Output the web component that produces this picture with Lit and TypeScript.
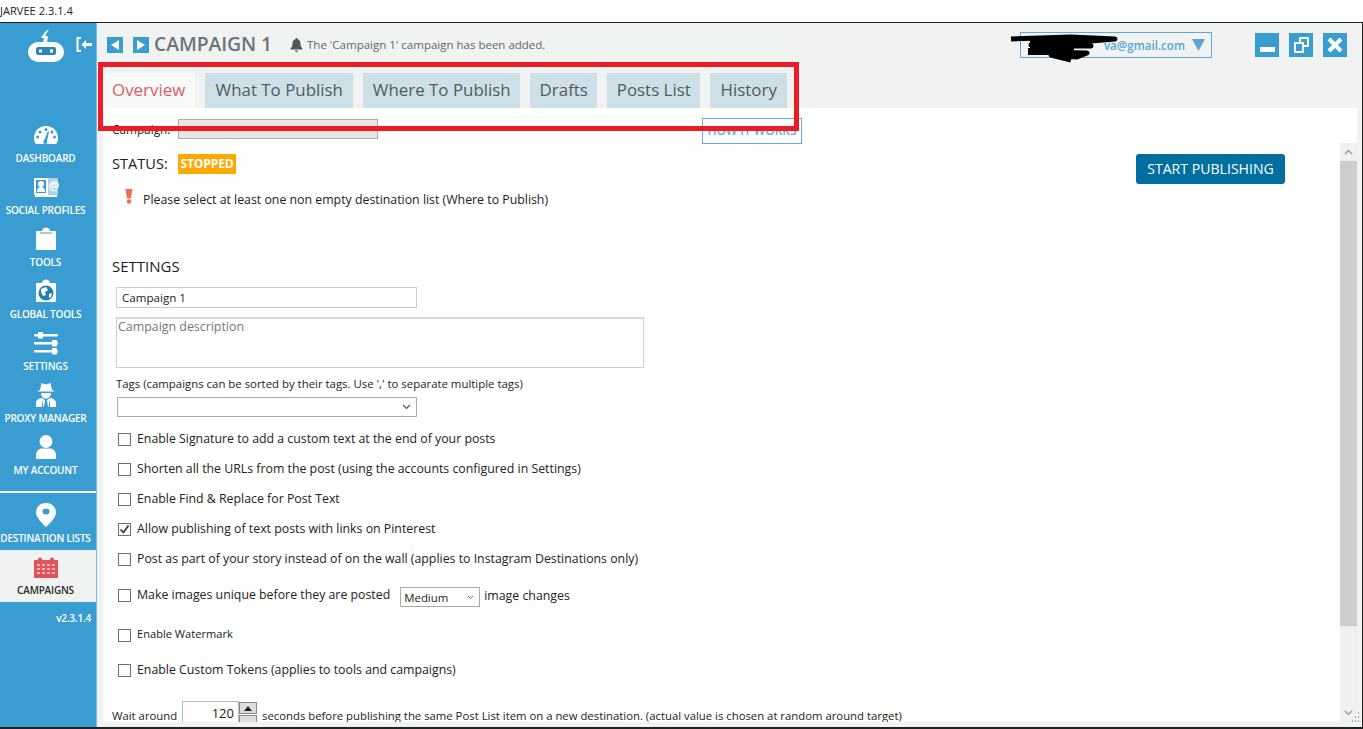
import { LitElement, html, css, svg } from "lit";
import { customElement } from "lit/decorators.js";

const I = {
  dash: svg`<svg width="26" height="24" viewBox="0 0 26 24"><path d="M13 3C6 3 1 8.500 1 15c0 2.500.7 4.500 2 6h20c1.300-1.500 2-3.500 2-6 0-6.500-5-12-12-12z" fill="#fff"/><g fill="#3a9dd1"><circle cx="13" cy="6.500" r="1.500"/><circle cx="7" cy="9" r="1.500"/><circle cx="19" cy="9" r="1.500"/><circle cx="4.500" cy="14" r="1.500"/><circle cx="21.500" cy="14" r="1.500"/><path d="M15 8l1 1-2 9a2 2 0 1 1-3-.5z"/></g></svg>`,
  social: svg`<svg width="26" height="24" viewBox="0 0 26 24"><path d="M1 3h14v17H1z" fill="#fff"/><path d="M3 5h10v13H3z" fill="#3a9dd1"/><circle cx="8" cy="9" r="3" fill="#fff"/><path d="M4 17c0-4 2-5 4-5s4 1 4 5z" fill="#fff"/><path d="M15 3h10v17H15z" fill="#a9d3ea"/><path d="M15 20h9v2H2v-2z" fill="#fff"/><text x="15.500" y="15" font-size="12" font-weight="700" font-family="Open Sans" fill="#fff">@</text></svg>`,
  tools: svg`<svg width="26" height="24" viewBox="0 0 26 24"><path d="M4 4h5c0-2 2-3.500 4-3.500S17 2 17 4h5c.6 0 1 .4 1 1v17c0 .6-.4 1-1 1H4c-.6 0-1-.4-1-1V5c0-.6.4-1 1-1z" fill="#fff"/><path d="M7 6h12" stroke="#3a9dd1" stroke-width="1"/></svg>`,
  globe: svg`<svg width="26" height="24" viewBox="0 0 26 24"><path d="M4 4h5c0-2 2-3.500 4-3.500S17 2 17 4h5c.6 0 1 .4 1 1v17c0 .6-.4 1-1 1H4c-.6 0-1-.4-1-1V5c0-.6.4-1 1-1z" fill="#fff"/><circle cx="13" cy="14" r="7.500" fill="#1f7fb3"/><path d="M8 10l5-2 2 3-3 2 1 3-3 1-2-4zM16 15l3-1-1 4-2 1z" fill="#fff"/></svg>`,
  sliders: svg`<svg width="26" height="24" viewBox="0 0 26 24"><g fill="#fff"><rect x="1" y="3" width="24" height="2.500" rx="1"/><rect x="5" y="1" width="5" height="6.500" rx="1"/><rect x="1" y="11" width="24" height="2.500" rx="1"/><rect x="19" y="9" width="5" height="6.500" rx="1"/><rect x="1" y="19" width="24" height="2.500" rx="1"/><rect x="19" y="17" width="5" height="6.500" rx="1"/></g></svg>`,
  spy: svg`<svg width="26" height="24" viewBox="0 0 26 24"><path d="M8.500 0l4.500 1.500L17.500 0l1.500 7 3 1.500H4L7 7z" fill="#fff"/><path d="M8 10h10c0 3.500-2 5.500-5 5.500S8 13.500 8 10z" fill="#fff"/><path d="M3 24v-4c0-3 2.500-4.500 6-5l4 3 4-3c3.500.5 6 2 6 5v4z" fill="#fff"/><path d="M12 17h2l1 7h-4zM9 16l1.500 8H9zM17 16l-1.500 8H17z" fill="#3a9dd1"/></svg>`,
  user: svg`<svg width="26" height="24" viewBox="0 0 26 24"><circle cx="13" cy="6.500" r="6.500" fill="#fff"/><path d="M3 24v-4c0-4 3-6.500 6-6.500h8c3 0 6 2.500 6 6.500v4z" fill="#fff"/></svg>`,
  pin: svg`<svg width="26" height="24" viewBox="0 0 26 24"><path fill-rule="evenodd" d="M13 0c6 0 10 4 10 9.500 0 5-6 10.500-10 14.500C9 20 3 14.500 3 9.500 3 4 7 0 13 0zm0 5.500a3.500 3 0 1 0 0 6 3.500 3 0 0 0 0-6z" fill="#fff"/></svg>`,
  cal: svg`<svg width="26" height="24" viewBox="0 -2 26 24"><path d="M2 3h22c.6 0 1 .4 1 1v16c0 .6-.4 1-1 1H2c-.6 0-1-.4-1-1V4c0-.6.4-1 1-1z" fill="#e2525a"/><circle cx="7" cy="2.500" r="2" fill="#e2525a"/><circle cx="19" cy="2.500" r="2" fill="#e2525a"/><g fill="#f7b9bc"><rect x="4" y="7" width="3" height="2"/><rect x="9" y="7" width="3" height="2"/><rect x="14" y="7" width="3" height="2"/><rect x="19" y="7" width="3" height="2"/><rect x="4" y="11" width="3" height="2"/><rect x="9" y="11" width="3" height="2"/><rect x="14" y="11" width="3" height="2"/><rect x="19" y="11" width="3" height="2"/><rect x="4" y="15" width="3" height="2"/><rect x="9" y="15" width="3" height="2"/><rect x="14" y="15" width="3" height="2"/><rect x="19" y="15" width="3" height="2"/></g></svg>`,
};

const NAV_TOP = [
  ["DASHBOARD", I.dash],
  ["SOCIAL PROFILES", I.social],
  ["TOOLS", I.tools],
  ["GLOBAL TOOLS", I.globe],
  ["SETTINGS", I.sliders],
  ["PROXY MANAGER", I.spy],
  ["MY ACCOUNT", I.user],
] as const;

const TABS: [string, number][] = [
  ["What To Publish", 148],
  ["Where To Publish", 157],
  ["Drafts", 67],
  ["Posts List", 93],
  ["History", 77],
];

@customElement("app-root")
export class AppRoot extends LitElement {
  static styles = css`
    :host { display: block; width: 1363px; height: 729px; overflow: hidden; position: relative; background: #222;
      font-family: "Open Sans", "Noto Sans", sans-serif; color: #222; }
    * { box-sizing: border-box; }
    .titlebar { height: 22px; background: #fff; font-size: 11.100px; line-height: 22px; color: #222; white-space: nowrap; }
    .window { height: 704px; margin-top: 1px; display: flex; margin-right: 1px; background: #f1f3f3; }
    .side { width: 97px; flex: none; background: #3a9dd1; border-right: 1px solid #7dbbdf; color: #fff; display: flex; flex-direction: column; }
    .logo { height: 95px; display: flex; align-items: flex-start; }
    .logo svg.bot { margin: 5px 0 0 27px; }
    .logo svg.col { margin: 14px 0 0 11px; }
    .item { height: 52px; display: flex; flex-direction: column; align-items: center; padding: 5px 5px 0 0; }
    .ic { height: 28px; display: block; }
    .lab { font-size: 10px; font-weight: 600; line-height: 14px; white-space: nowrap; letter-spacing: -.2px; }
    .item.on { background: #f1f3f3; color: #2a2a2a; }
    .sep { height: 2px; background: #fff; margin: 9px 0 5px; }
    .ver { font-size: 10px; font-weight: 600; text-align: right; padding: 9px 5px 0 0; letter-spacing: -.2px; }
    .main { flex: 1; min-width: 0; display: flex; flex-direction: column; }
    .head { height: 85px; position: relative; flex: none; }
    .hrow { height: 50px; display: flex; align-items: flex-start; }
    .arrow { width: 16px; height: 16px; background: #3a9dd1; margin-top: 14px; display: flex; align-items: center; justify-content: center; }
    .arrow.a1 { margin-left: 10px; }
    .arrow.a2 { margin-left: 10px; }
    .ttl { margin: 7px 0 0 5px; font-size: 19.400px; font-weight: 600; line-height: 28px; color: #6d7479; letter-spacing: -.1px; white-space: nowrap; }
    .bell { margin: 15px 0 0 18px; }
    .msg { margin: 13px 0 0 4px; font-size: 11.500px; line-height: 18px; color: #666; white-space: nowrap; }
    .email { position: absolute; left: 923px; top: 9px; width: 192px; height: 26px; border: 1px solid #62a8d8; display: flex; align-items: center; justify-content: flex-end; padding-right: 6px; gap: 7px; color: #5ca4d6; font-size: 11.600px; font-weight: 600; overflow: hidden; white-space: nowrap; }
    .wbtns { position: absolute; left: 1158px; top: 10px; display: flex; gap: 10px; }
    .wb { width: 24px; height: 24px; background: #3a9dd1; display: block; }
    .tabs { display: flex; gap: 10px; padding-left: 6px; height: 35px; }
    .tab { height: 35px; background: #cde0e8; text-align: center; font-size: 16.900px; line-height: 33px; color: #56595c; white-space: nowrap; }
    .tab.on { background: #f8f9f9; color: #d9605f; padding: 0 10px 0 9px; }
    .body { flex: 1; min-height: 0; margin: 0 5px 5px 6px; background: #fff; display: flex; overflow: hidden; }
    .form { flex: 1; min-width: 0; padding: 0 55px 0 9px; display: flex; flex-direction: column; font-size: 12.330px; }
    .form > * { flex: none; }
    .r1 { height: 26px; margin-top: 10px; display: flex; align-items: flex-start; }
    .r1 .cl { width: 66px; line-height: 20px; margin-top: 1px; font-size: 11.800px; }
    .csel { width: 200px; height: 20px; margin-top: 1px; background: #e6e6e6; border: 1px solid #adadad; }
    .how { margin-left: 324px; width: 100px; height: 26px; border: 1px solid #6aaad6; color: #6aaad6; text-align: center; line-height: 24px; font-size: 12px; font-weight: 600; white-space: nowrap; }
    .r2 { height: 30px; margin-top: 10px; display: flex; align-items: flex-start; }
    .st { width: 66px; font-size: 14.600px; line-height: 18px; }
    .badge { width: 58px; height: 20px; background: #ffa800; color: #fff; font-weight: 700; font-size: 12.200px; line-height: 19px; text-align: center; white-space: nowrap; letter-spacing: -.2px; }
    .start { margin-left: auto; width: 149px; height: 30px; background: #006f9f; color: #fff; border-radius: 3px; text-align: center; line-height: 29px; font-size: 14.100px; white-space: nowrap; }
    .warn { height: 18px; margin-top: 6px; display: flex; align-items: flex-start; padding-left: 12px; }
    .warn span { margin: 1px 0 0 9px; line-height: 18px; white-space: nowrap; }
    .warn svg { margin-top: -1px; }
    .sett { margin-top: 48px; font-size: 15px; line-height: 20px; }
    .in { margin: 11px 0 0 4px; width: 301px; height: 21px; border: 1px solid #ccc; line-height: 19px; padding-left: 5px; font-size: 11.600px; }
    .ta { margin: 9px 0 0 4px; width: 528px; height: 51px; border: 1px solid #ccc; border-top: 2px solid #d8d8d8; padding: 0 1px; color: #777; line-height: 16px; font-size: 12.400px; }
    .tags { margin: 9px 0 0 4px; line-height: 14px; height: 14px; font-size: 11.400px; white-space: nowrap; }
    .sel { margin: 6px 0 0 5px; width: 300px; height: 20px; border: 1px solid #aaa; display: flex; align-items: center; justify-content: flex-end; padding-right: 5px; }
    .ck { height: 30px; display: flex; align-items: center; padding-left: 6px; white-space: nowrap; }
    .ck .lb { margin-left: 6px; margin-top: -2px; }
    .box { width: 13px; height: 13px; border: 1px solid #6f6f6f; background: #fff; flex: none; display: flex; align-items: center; justify-content: center; }
    .g0 { margin-top: 7px; }
    .g6 { margin-top: 6px; }
    .g10 { margin-top: 10px; font-size: 11.100px; }
    .g10 .lb { margin-top: -4px; }
    .g5 { margin-top: 5px; }
    .med { width: 80px; height: 20px; margin: 4px 0 0 10px; border: 1px solid #aaa; padding: 0 5px 0 3px; font-size: 11.400px; display: flex; align-items: center; justify-content: space-between; }
    .after { margin: 0 0 0 4px; }
    .wait { height: 30px; margin-top: 16px; display: flex; align-items: flex-start; white-space: nowrap; font-size: 11.330px; }
    .wait .t1 { width: 70px; line-height: 28px; margin-top: 1px; }
    .num { width: 57px; height: 26px; border: 1px solid #bbb; text-align: right; padding-right: 4px; line-height: 23px; font-size: 13px; }
    .spin { width: 18px; height: 26px; display: flex; flex-direction: column; margin-top: 1px; }
    .spin i { display: flex; height: 12px; border: 1px solid #888; background: #ddd; align-items: center; justify-content: center; margin-bottom: 1px; }
    .wait .t2 { margin: 1px 0 0 5px; line-height: 28px; }
    .sb { width: 17px; flex: none; margin-top: 35px; background: #f0f0f0; display: flex; flex-direction: column; }
    .sb .u { height: 18px; display: flex; align-items: center; justify-content: center; }
    .sb .th { height: 465px; background: #cdcdcd; }
    .sb .sp { flex: 1; }
    .sb .d { height: 18px; display: flex; align-items: center; justify-content: center; }
    .red { position: absolute; left: 98px; top: 62px; width: 701px; height: 69px; border: 5px solid #ee1c25; pointer-events: none; }
    .scrib { position: absolute; left: 1008px; top: 34px; pointer-events: none; }
    .grip { position: absolute; left: 1349px; top: 711px; }
  `;

  private check(text: unknown, cls = "", on = false, extra: unknown = "") {
    return html`<div class="ck ${cls}"><span class="box">${on
      ? svg`<svg width="11" height="11" viewBox="0 0 11 11"><path d="M1.500 5.500l3 3 5-7" fill="none" stroke="#333" stroke-width="1.700"/></svg>`
      : ""}</span><span class="lb">${text}</span>${extra}</div>`;
  }

  render() {
    const chev = svg`<svg width="9" height="6" viewBox="0 0 9 6"><path d="M1 1l3.500 3.500L8 1" fill="none" stroke="#555" stroke-width="1.200"/></svg>`;
    const medChev = svg`<svg width="7" height="5" viewBox="0 0 7 5"><path d="M1 1l2.500 2.500L6 1" fill="none" stroke="#666" stroke-width="1"/></svg>`;
    return html`
      <div class="titlebar">JARVEE 2.3.1.4</div>
      <div class="window">
        <aside class="side">
          <div class="logo">
            <svg class="bot" width="38" height="36" viewBox="0 0 38 36"><path d="M22 1l-4 7 3 0-1 7h-4l1-5-3 0 4-6z" fill="#fff"/><rect x="1" y="14" width="36" height="20" rx="10" fill="#fff"/><rect x="9" y="19" width="20" height="8" rx="2" fill="#2d86b8"/><rect x="12" y="21.500" width="3" height="3" fill="#fff"/><rect x="23" y="21.500" width="3" height="3" fill="#fff"/></svg>
            <svg class="col" width="17" height="15" viewBox="0 0 17 15"><path d="M5 1H1.500v13H5" fill="none" stroke="#fff" stroke-width="2"/><path d="M5.500 7.500L10 3v3h6v3h-6v3z" fill="#fff"/></svg>
          </div>
          ${NAV_TOP.map(([l, ic]) => html`<div class="item"><span class="ic">${ic}</span><span class="lab">${l}</span></div>`)}
          <div class="sep"></div>
          <div class="item"><span class="ic">${I.pin}</span><span class="lab">DESTINATION LISTS</span></div>
          <div class="item on"><span class="ic">${I.cal}</span><span class="lab">CAMPAIGNS</span></div>
          <div class="ver">v2.3.1.4</div>
        </aside>
        <section class="main">
          <div class="head">
            <div class="hrow">
              <span class="arrow a1"><svg width="10" height="10" viewBox="0 0 10 10"><path d="M1 5l8-5v10z" fill="#fff"/></svg></span>
              <span class="arrow a2"><svg width="10" height="10" viewBox="0 0 10 10"><path d="M9 5L1 0v10z" fill="#fff"/></svg></span>
              <span class="ttl">CAMPAIGN 1</span>
              <svg class="bell" width="13" height="14" viewBox="0 0 13 14"><path d="M6.500 0a1 1 0 0 1 1 1.200c2 .5 3 2 3 4.300 0 3 1 4 2 5v1H.5v-1c1-1 2-2 2-5 0-2.300 1-3.800 3-4.300a1 1 0 0 1 1-1.200zM5 12.500h3a1.500 1.500 0 0 1-3 0z" fill="#555"/></svg>
              <span class="msg">The 'Campaign 1' campaign has been added.</span>
            </div>
            <div class="email"><span>va@gmail.com</span><svg width="13" height="12" viewBox="0 0 13 12"><path d="M0 0h13L6.500 12z" fill="#5ca4d6"/></svg></div>
            <div class="wbtns">
              <svg class="wb" viewBox="0 0 24 24"><rect x="5" y="14" width="15" height="5" fill="#fff"/></svg>
              <svg class="wb" viewBox="0 0 24 24"><path d="M11 9V5h8v8h-4M6 10h8v9H6z" fill="none" stroke="#fff" stroke-width="2"/></svg>
              <svg class="wb" viewBox="0 0 24 24"><path d="M6 6l12 12M18 6L6 18" stroke="#fff" stroke-width="4"/></svg>
            </div>
            <div class="tabs">
              <div class="tab on">Overview</div>
              ${TABS.map(([t, w]) => html`<div class="tab" style="width:${w}px">${t}</div>`)}
            </div>
          </div>
          <div class="body">
            <div class="form">
              <div class="r1"><span class="cl">Campaign:</span><span class="csel"></span><span class="how">HOW IT WORKS</span></div>
              <div class="r2"><span class="st">STATUS:</span><span class="badge">STOPPED</span><span class="start">START PUBLISHING</span></div>
              <div class="warn"><svg width="10" height="15" viewBox="0 0 10 15"><path d="M1.500 0h7L7 9.500H3z" fill="#e8734f"/><circle cx="5" cy="12.500" r="2.200" fill="#e8734f"/></svg><span>Please select at least one non empty destination list (Where to Publish)</span></div>
              <div class="sett">SETTINGS</div>
              <div class="in">Campaign 1</div>
              <div class="ta">Campaign description</div>
              <div class="tags">Tags (campaigns can be sorted by their tags. Use ',' to separate multiple tags)</div>
              <div class="sel">${chev}</div>
              ${this.check("Enable Signature to add a custom text at the end of your posts", "g0")}
              ${this.check("Shorten all the URLs from the post (using the accounts configured in Settings)")}
              ${this.check("Enable Find & Replace for Post Text")}
              ${this.check("Allow publishing of text posts with links on Pinterest", "", true)}
              ${this.check("Post as part of your story instead of on the wall (applies to Instagram Destinations only)")}
              ${this.check("Make images unique before they are posted", "g6", false, html`<span class="med">Medium ${medChev}</span><span class="after">image changes</span>`)}
              ${this.check("Enable Watermark", "g10")}
              ${this.check("Enable Custom Tokens (applies to tools and campaigns)", "g5")}
              <div class="wait"><span class="t1">Wait around</span><span class="num">120</span><span class="spin"><i><svg width="8" height="5" viewBox="0 0 8 5"><path d="M4 0l4 5H0z" fill="#222"/></svg></i><i></i></span><span class="t2">seconds before publishing the same Post List item on a new destination. (actual value is chosen at random around target)</span></div>
            </div>
            <div class="sb">
              <div class="u"><svg width="9" height="6" viewBox="0 0 9 6"><path d="M1 5l3.500-3.500L8 5" fill="none" stroke="#999" stroke-width="1.300"/></svg></div>
              <div class="th"></div><div class="sp"></div>
              <div class="d"><svg width="9" height="6" viewBox="0 0 9 6"><path d="M1 1l3.500 3.500L8 1" fill="none" stroke="#999" stroke-width="1.300"/></svg></div>
            </div>
          </div>
        </section>
      </div>
      <svg class="scrib" width="112" height="32" viewBox="0 0 112 32"><path d="M3 5l60-2 44 2-48 4 24 3-60-1 40 4-30 3 46 1-10 4-26-2 20 5" fill="none" stroke="#000" stroke-width="5" stroke-linejoin="round"/><path d="M22 2h44v14H22zM20 14h40v7H20z" fill="#000"/></svg>
      <svg class="grip" width="12" height="14" viewBox="0 0 12 14"><g fill="#9aa6c8"><rect x="9" y="1" width="1" height="2"/><rect x="9" y="5" width="1" height="2"/><rect x="6" y="5" width="1" height="2"/><rect x="9" y="9" width="1" height="2"/><rect x="6" y="9" width="1" height="2"/><rect x="3" y="9" width="1" height="2"/></g></svg>
      <div class="red"></div>
    `;
  }
}
